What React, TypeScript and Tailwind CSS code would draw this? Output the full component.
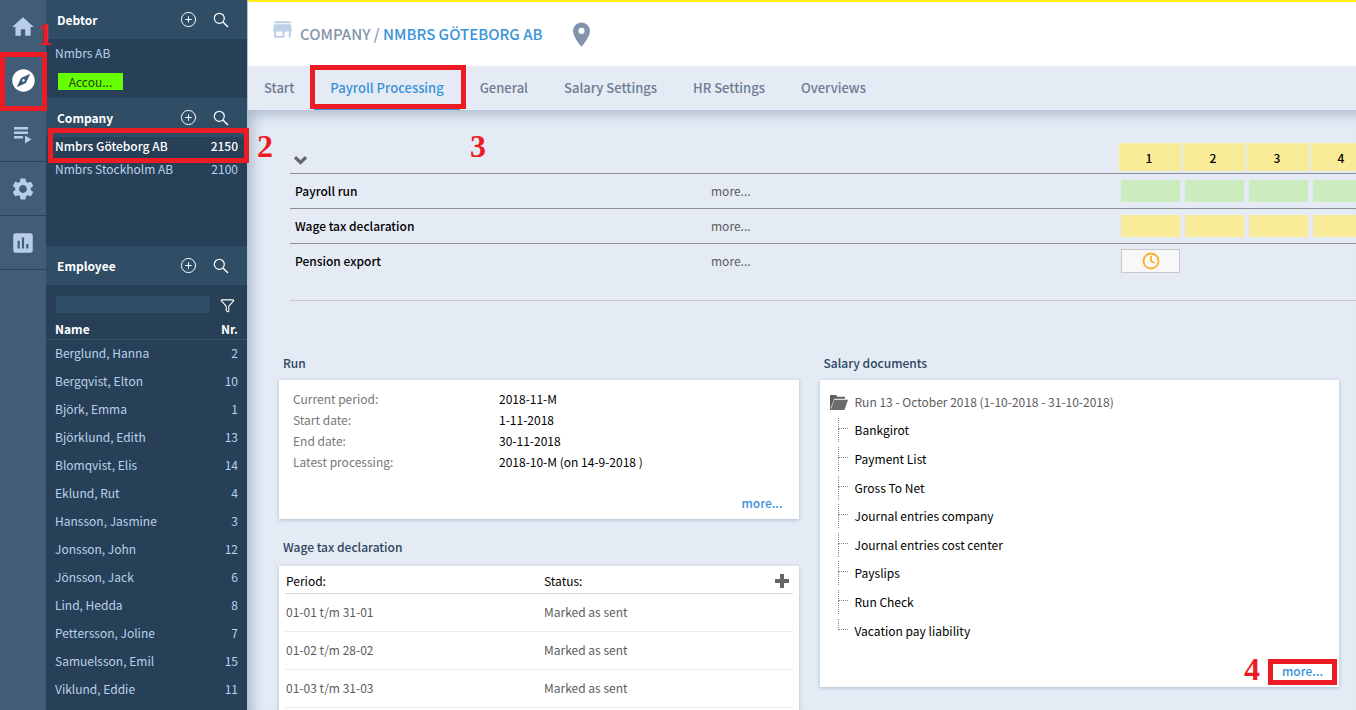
import type { ReactNode } from "react";
import { CirclePlus, Clock, Funnel } from "lucide-react";
import { MdAssessment, MdExplore, MdHome, MdPlace, MdSettings, MdStore } from "react-icons/md";

const employees = [
  { name: "Berglund, Hanna", nr: 2 },
  { name: "Bergqvist, Elton", nr: 10 },
  { name: "Björk, Emma", nr: 1 },
  { name: "Björklund, Edith", nr: 13 },
  { name: "Blomqvist, Elis", nr: 14 },
  { name: "Eklund, Rut", nr: 4 },
  { name: "Hansson, Jasmine", nr: 3 },
  { name: "Jonsson, John", nr: 12 },
  { name: "Jönsson, Jack", nr: 6 },
  { name: "Lind, Hedda", nr: 8 },
  { name: "Pettersson, Joline", nr: 7 },
  { name: "Samuelsson, Emil", nr: 15 },
  { name: "Viklund, Eddie", nr: 11 },
];

const periods = [1, 2, 3, 4];

const runDetails = [
  ["Current period:", "2018-11-M"],
  ["Start date:", "1-11-2018"],
  ["End date:", "30-11-2018"],
  ["Latest processing:", "2018-10-M (on 14-9-2018 )"],
];

const declarations = ["01-01 t/m 31-01", "01-02 t/m 28-02", "01-03 t/m 31-03"];

const documents = [
  "Bankgirot",
  "Payment List",
  "Gross To Net",
  "Journal entries company",
  "Journal entries cost center",
  "Payslips",
  "Run Check",
  "Vacation pay liability",
];

const railItems = [
  { label: "Home", icon: <MdHome size={26} /> },
  { label: "Explore", icon: <MdExplore size={27} /> },
  { label: "Tasks", icon: <TasksIcon /> },
  { label: "Settings", icon: <MdSettings size={26} /> },
  { label: "Reports", icon: <MdAssessment size={26} /> },
];

const tabs = ["Start", "Payroll Processing", "General", "Salary Settings", "HR Settings", "Overviews"];

function StepNumber({ children, className }: { children: ReactNode; className: string }) {
  return (
    <span
      className={`pointer-events-none absolute z-20 font-['Liberation_Serif',serif] text-[32px] leading-8 font-bold text-[#ed1c24] ${className}`}
    >
      {children}
    </span>
  );
}

function StepBox({ className }: { className: string }) {
  return <span className={`pointer-events-none absolute z-20 border-5 border-[#ed1c24] ${className}`} />;
}

function TasksIcon() {
  return (
    <svg width="18" height="18" viewBox="0 0 18 18" fill="currentColor" aria-hidden="true">
      <path d="M0 1h14v2.500H0zM0 5.500h14V8H0zM0 10h9v2.500H0zM11 9.500l6.500 4-6.500 4z" />
    </svg>
  );
}

function SearchIcon() {
  return (
    <svg width="16" height="16" viewBox="0 0 16 16" fill="none" stroke="currentColor" aria-hidden="true">
      <circle cx="6.300" cy="6.300" r="5" strokeWidth="1.200" />
      <path d="M9.900 9.900L15 15" strokeWidth="1.400" />
    </svg>
  );
}

function FolderIcon() {
  return (
    <svg width="18" height="15" viewBox="0 0 18 15" aria-hidden="true">
      <path d="M0 0h6l1.500 1.800H15v2H4.200L1 12.500V15H0z" fill="#5f5f5f" />
      <path d="M4.200 4.700H18L14.500 15H0.800z" fill="#6b6b6b" />
    </svg>
  );
}

function PlusIcon() {
  return (
    <svg width="14" height="14" viewBox="0 0 14 14" fill="currentColor" aria-hidden="true">
      <path d="M5 0h4v5h5v4H9v5H5V9H0V5h5z" />
    </svg>
  );
}

function ChevronIcon() {
  return (
    <svg width="13" height="9" viewBox="0 0 13 9" fill="none" stroke="currentColor" aria-hidden="true">
      <path d="M1 1.200l5.500 5.300L12 1.200" strokeWidth="3.200" />
    </svg>
  );
}

function PanelHeader({ title }: { title: string }) {
  return (
    <div className="flex h-[39px] shrink-0 items-center bg-[#2f4d65] pr-[18px] pl-[11px] text-white">
      <h2 className="flex-1 font-bold">{title}</h2>
      <button aria-label={`Add ${title}`} className="mr-4">
        <CirclePlus size={17} strokeWidth={1.4} />
      </button>
      <button aria-label={`Search ${title}`}>
        <SearchIcon />
      </button>
    </div>
  );
}

function Sidebar() {
  return (
    <aside className="flex w-[201px] shrink-0 flex-col bg-[#274057] text-[#b9d1ea]">
      <PanelHeader title="Debtor" />
      <div className="h-[59px] shrink-0 px-[9px] pt-1">
        <a href="#debtor" className="block leading-5">
          Nmbrs AB
        </a>
        <button className="mt-[10px] ml-[3px] block h-[17px] w-[65px] bg-[#66ff00] text-center leading-4 text-[#23420d]">
          Accou...
        </button>
      </div>

      <PanelHeader title="Company" />
      <div className="h-[109px] shrink-0">
        <a
          href="#goteborg"
          className="relative flex h-[22px] justify-between px-[9px] leading-[18px] font-medium text-white"
        >
          <span>Nmbrs Göteborg AB</span>
          <span>2150</span>
          <StepBox className="-top-[9px] -right-[2px] left-[2px] h-[35px]" />
          <StepNumber className="-top-[7px] -right-[26px]">2</StepNumber>
        </a>
        <a href="#stockholm" className="flex h-[22px] justify-between px-[9px] leading-5">
          <span>Nmbrs Stockholm AB</span>
          <span>2100</span>
        </a>
      </div>

      <PanelHeader title="Employee" />
      <div className="flex h-[34px] shrink-0 items-end justify-between pr-3 pb-[6px] pl-[10px]">
        <input aria-label="Filter employees" className="h-[17px] w-[154px] bg-[#2f4d65] px-1 outline-none" />
        <button aria-label="Filter" className="text-white">
          <Funnel size={15} strokeWidth={1.7} />
        </button>
      </div>
      <table className="w-full">
        <thead>
          <tr className="h-5 border-b border-[#345069] text-left text-white">
            <th className="pl-[9px] leading-4">Name</th>
            <th className="pr-[9px] text-right leading-4">Nr.</th>
          </tr>
        </thead>
        <tbody>
          {employees.map((employee) => (
            <tr key={employee.nr} className="h-7">
              <td className="pl-[9px]">
                <a href={`#employee-${employee.nr}`}>{employee.name}</a>
              </td>
              <td className="pr-[9px] text-right">{employee.nr}</td>
            </tr>
          ))}
        </tbody>
      </table>
    </aside>
  );
}

function Timeline() {
  return (
    <div className="ml-[42px] overflow-hidden border-b border-[#c8c8c8] pb-[22px]">
      <table className="w-[1085px] table-fixed">
        <thead>
          <tr className="h-[30px] border-b border-[#8f8f8f]">
            <th className="w-[416px] pl-1 text-left align-bottom">
              <button aria-label="Collapse" className="mb-2 block text-[#666]">
                <ChevronIcon />
              </button>
            </th>
            <th className="w-[413px]" />
            {periods.map((period) => (
              <th key={period} className="p-0 align-top font-medium text-black">
                <div className="mr-[2px] h-7 bg-[#f9ec98] pr-[2px] leading-[29px]">{period}</div>
              </th>
            ))}
          </tr>
        </thead>
        <tbody>
          <tr className="h-[35px] border-b border-[#8f8f8f]">
            <td className="pl-[5px] font-medium text-black">Payroll run</td>
            <td className="pl-[5px]">
              <a href="#payroll-run">more...</a>
            </td>
            {periods.map((period) => (
              <td key={period}>
                <div className="mr-[3px] ml-[2px] h-[22px] bg-[#caecbe]" />
              </td>
            ))}
          </tr>
          <tr className="h-[35px] border-b border-[#8f8f8f]">
            <td className="pl-[5px] font-medium text-black">Wage tax declaration</td>
            <td className="pl-[5px]">
              <a href="#wage-tax">more...</a>
            </td>
            {periods.map((period) => (
              <td key={period}>
                <div className="mr-[3px] ml-[2px] h-[22px] bg-[#f9ec98]" />
              </td>
            ))}
          </tr>
          <tr className="h-[35px]">
            <td className="pl-[5px] font-medium text-black">Pension export</td>
            <td className="pl-[5px]">
              <a href="#pension">more...</a>
            </td>
            <td>
              <button
                aria-label="Pending"
                className="ml-[2px] flex h-6 w-[59px] items-center justify-center border border-[#c8c8c8] bg-[#f8f8f8] text-[#fbb02a]"
              >
                <Clock size={18} strokeWidth={2.5} />
              </button>
            </td>
            <td colSpan={3} />
          </tr>
        </tbody>
      </table>
    </div>
  );
}

function RunCard() {
  return (
    <section>
      <h2 className="pl-1 leading-5 font-medium text-[#2b4560]">Run</h2>
      <div className="mt-[7px] flex h-[139px] flex-col bg-white px-[14px] pt-2 shadow-[0_1px_4px_#a9bccd]">
        <dl className="flex-1">
          {runDetails.map(([label, value]) => (
            <div key={label} className="flex leading-[21px]">
              <dt className="w-[206px] text-[#777]">{label}</dt>
              <dd className="text-black">{value}</dd>
            </div>
          ))}
        </dl>
        <a href="#run" className="mr-[2px] mb-[6px] self-end leading-5 font-medium text-[#3a93d8]">
          more...
        </a>
      </div>
    </section>
  );
}

function DeclarationCard() {
  return (
    <section>
      <h2 className="pl-1 leading-5 font-medium text-[#2b4560]">Wage tax declaration</h2>
      <div className="mt-[9px] bg-white px-[6px] pb-4 shadow-[0_1px_4px_#a9bccd]">
        <table className="w-full">
          <thead>
            <tr className="h-[27px] border-b border-[#d6d6d6] text-left text-black">
              <th className="w-[259px] pt-1 pl-px font-normal">Period:</th>
              <th className="pt-1 font-normal">Status:</th>
              <th className="pt-1 pr-1">
                <button aria-label="Add declaration" className="ml-auto block text-[#666]">
                  <PlusIcon />
                </button>
              </th>
            </tr>
          </thead>
          <tbody>
            {declarations.map((period) => (
              <tr key={period} className="h-[38px] border-b border-[#ececec] text-[#5c5c5c]">
                <td className="pl-px">{period}</td>
                <td colSpan={2}>Marked as sent</td>
              </tr>
            ))}
          </tbody>
        </table>
      </div>
    </section>
  );
}

function DocumentsCard() {
  return (
    <section>
      <h2 className="pl-1 leading-5 font-medium text-[#2b4560]">Salary documents</h2>
      <div className="mt-[7px] flex h-[307px] flex-col bg-white pt-2 pl-[10px] shadow-[0_1px_4px_#a9bccd]">
        <div className="flex h-7 items-center gap-[7px]">
          <FolderIcon />
          <span>Run 13 - October 2018 (1-10-2018 - 31-10-2018)</span>
        </div>
        <ul className="grid h-[229px] auto-rows-fr text-black">
          {documents.map((name, index) => (
            <li key={name} className="flex items-center pl-2">
              <span className="flex h-6 w-[17px] flex-col">
                <span className="h-[11px] w-[10px] border-b border-l border-dotted border-[#888]" />
                {index < documents.length - 1 && <span className="flex-1 border-l border-dotted border-[#888]" />}
              </span>
              <a href="#document">{name}</a>
            </li>
          ))}
        </ul>
        <a href="#documents" className="relative mt-4 mr-4 self-end leading-5 font-medium text-[#3a93d8]">
          more...
          <StepBox className="-top-[2px] -right-[14px] -left-[14px] h-[26px]" />
          <StepNumber className="-top-[8px] -left-[38px]">4</StepNumber>
        </a>
      </div>
    </section>
  );
}

export default function App() {
  return (
    <div className="flex h-screen overflow-hidden bg-[#e4ebf4] font-['Noto_Sans_CJK_SC','Noto_Sans',sans-serif] text-xs leading-5 text-[#5c5c5c]">
      <nav className="flex w-[46px] shrink-0 flex-col bg-[#405c76]">
        {railItems.map((item) => (
          <a
            key={item.label}
            href="#menu"
            aria-label={item.label}
            className={`relative flex h-[54px] shrink-0 items-center justify-center border-b border-[#2a4359] ${
              item.label === "Explore" ? "text-white" : "text-[#b8cde6]"
            }`}
          >
            {item.icon}
            {item.label === "Home" && <StepNumber className="top-[18px] left-[37px]">1</StepNumber>}
            {item.label === "Explore" && <StepBox className="-top-[2px] -right-px left-0 h-[59px]" />}
          </a>
        ))}
      </nav>

      <Sidebar />

      <main className="flex min-w-0 flex-1 flex-col border-l border-[#b4c3d5]">
        <header className="flex h-[66px] shrink-0 items-center border-t-2 border-[#ffee11] bg-white pl-[22px] text-[#8595aa]">
          <MdStore size={25} className="mb-[10px] text-[#bdd0e8]" />
          <h1 className="ml-[5px] text-[15px] font-medium">
            COMPANY / <span className="text-[#3a93d8]">NMBRS GÖTEBORG AB</span>
          </h1>
          <MdPlace size={29} className="ml-6 text-[#8194ac]" />
        </header>

        <nav className="flex h-11 shrink-0 gap-1 bg-[#e4ebf4] text-[13px] font-medium text-[#6c7c92]">
          {tabs.map((tab) => (
            <a
              key={tab}
              href="#tab"
              className={`relative flex items-center px-4 ${
                tab === "Payroll Processing" ? "border-b-2 border-[#3a93d8] pt-[2px] text-[#3a93d8]" : ""
              }`}
            >
              {tab}
              {tab === "Payroll Processing" && <StepBox className="-top-px -right-[6px] -left-1 h-11" />}
            </a>
          ))}
        </nav>

        <div className="relative min-h-0 flex-1 overflow-hidden pt-[33px] shadow-[inset_8px_8px_14px_-4px_#a9b8cc]">
          <StepNumber className="top-5 left-[222px]">3</StepNumber>
          <Timeline />
          <div className="mt-[52px] grid grid-cols-2 items-start gap-[21px] pr-[17px] pl-[31px]">
            <div className="flex flex-col gap-[18px]">
              <RunCard />
              <DeclarationCard />
            </div>
            <DocumentsCard />
          </div>
        </div>
      </main>
    </div>
  );
}
